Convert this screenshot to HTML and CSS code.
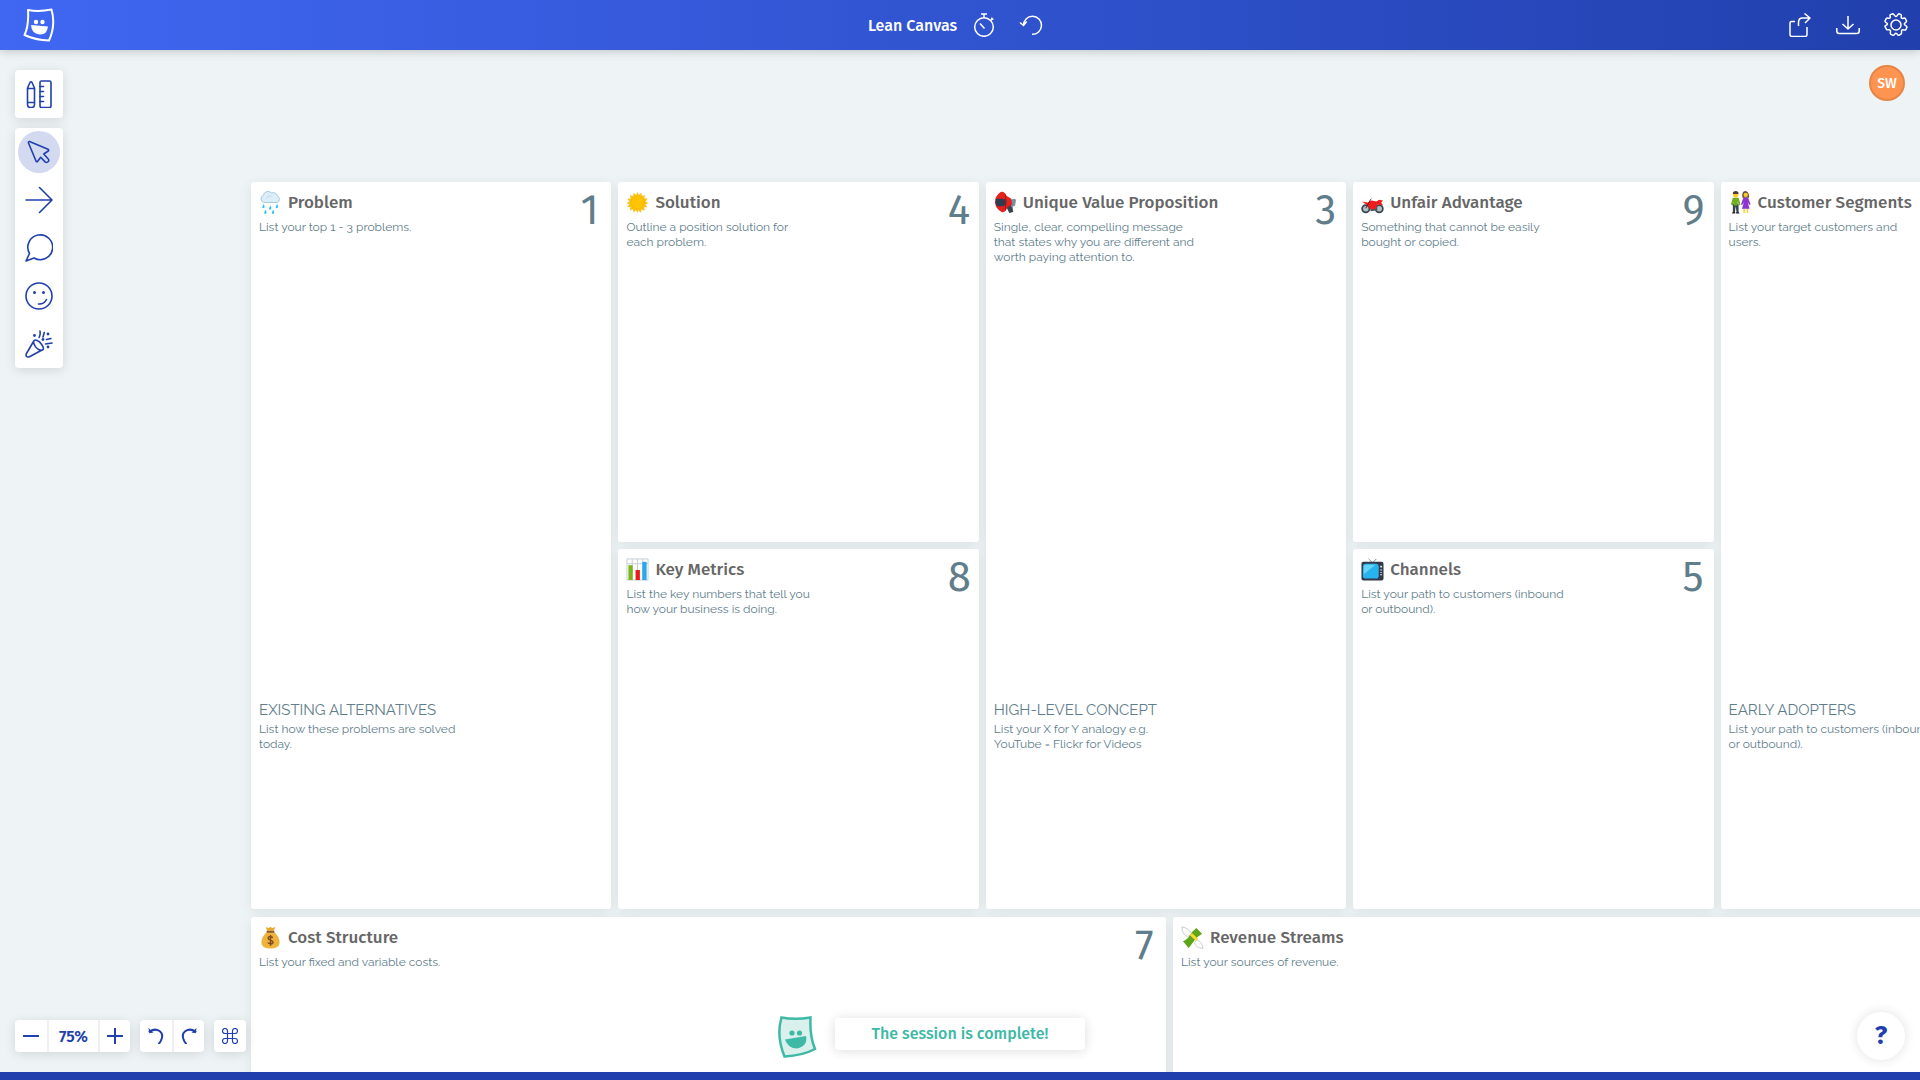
FILE: index.html
```
<!DOCTYPE html>
<html lang="en">
<head>
  <meta charset="UTF-8">
  <meta name="viewport" content="width=device-width, initial-scale=1.0">
  <link rel="stylesheet" href="styles.css">
  <title>Lean Canvas</title>
</head>
<body>

<header class="topbar">
  <div class="topbar-side">
    <a href="#" class="logo" aria-label="Home">
      <svg width="32" height="34" viewBox="0 0 32 34" fill="none" stroke="#fff" stroke-width="2" stroke-linejoin="round">
        <path d="M5 2 Q16 4 28.500 1.500 Q33 17 26 32.500 Q12 32 1.500 27 Q6 18 5 2z"/>
        <circle cx="13" cy="14" r="2.200" fill="#fff" stroke="none"/>
        <circle cx="19.500" cy="14" r="2.200" fill="#fff" stroke="none"/>
        <path d="M8 17 L25 18.500 Q24 27 16.500 26.500 Q8.500 25.500 8 17z" fill="#fff" stroke="none"/>
      </svg>
    </a>
  </div>

  <div class="topbar-center">
    <h1>Lean Canvas</h1>
    <button class="bar-btn" aria-label="Timer">
      <svg width="24" height="24" viewBox="0 0 24 24" fill="none" stroke="#fff" stroke-width="1.500">
        <circle cx="12" cy="14" r="9.300"/>
        <path d="M12 4.700V1M9 1h6M18.300 7.700l2-2M19.300 4.700l2 2M12.500 15.500L8 10.500"/>
      </svg>
    </button>
    <button class="bar-btn" aria-label="Reset">
      <svg width="24" height="24" viewBox="0 0 24 24" fill="none" stroke="#fff" stroke-width="1.500">
        <path d="M4.500 12.500a9 9 0 1 1 8.500 8.800M1 9.500l3.500 3 3.200-4"/>
      </svg>
    </button>
  </div>

  <div class="topbar-side topbar-right">
    <button class="bar-btn" aria-label="Share">
      <svg width="24" height="24" viewBox="0 0 24 24" fill="none" stroke="#fff" stroke-width="1.500" stroke-linejoin="round">
        <path d="M7 8.500H3.500A1.500 1.500 0 0 0 2 10v11.500a2 2 0 0 0 2 2h13a2 2 0 0 0 2-2V14M10.500 13V9.500q0-4.500 4-4.500h7.500M16.500.5L22 5l-5 5"/>
      </svg>
    </button>
    <button class="bar-btn" aria-label="Download">
      <svg width="24" height="24" viewBox="0 0 24 24" fill="none" stroke="#fff" stroke-width="1.500" stroke-linejoin="round">
        <path d="M.8 15v3a2.500 2.500 0 0 0 2.500 2.500h17.400a2.500 2.500 0 0 0 2.500-2.500v-3M12 3v13M6.500 11l5.500 5 5.500-5"/>
      </svg>
    </button>
    <button class="bar-btn" aria-label="Settings">
      <svg width="24" height="24" viewBox="0 0 24 24" fill="none" stroke="#fff" stroke-width="1.500" stroke-linejoin="round">
        <circle cx="12" cy="12" r="5"/>
        <path d="M12 3.500c1.500 0 1.500-2.700 3-2.700l2 .8c1.200.8-.6 2.700.6 3.600s2.800-1 3.700.3l1.200 2.500c.6 1.500-2.200 1.600-2.200 3s2.800 1.800 2.700 3.200l-1.200 2.500c-.8 1-2.900-.6-3.900.4s.4 2.900-.8 3.900l-2.300 1.300c-1.500.4-1.300-2.100-2.800-2.100s-1.500 2.500-3 2.100l-2.300-1.200c-1.200-1 .6-2.800-.5-3.900s-3 .4-3.700-.8L1 13.700c-.3-1.500 2.500-1.300 2.500-2.700S.7 9.400 1 8l1.200-2.400c.9-1.300 2.800.3 3.800-.6S5.200 2.300 6.400 1.600l2.300-.8c1.500 0 1.800 2.700 3.300 2.700z"/>
      </svg>
    </button>
  </div>
</header>

<main class="workspace">
  <div class="board">
    <div class="board-top">
      <section class="card tall">
        <div class="card-head">
          <svg class="emoji" viewBox="0 0 24 24">
            <path d="M5 12a4 4 0 0 1-.5-7.500A5 5 0 0 1 13 2a5 5 0 0 1 6.500 3.500 3.600 3.600 0 0 1-.5 6.500z" fill="#dceefa" stroke="#a3c4d9" stroke-width="1"/>
            <path d="M8 8a3 3 0 0 1 5-2" fill="none" stroke="#bdd6e6"/>
            <path d="M5 13.500q-3 4-.5 4.500 2.500-.5.500-4.500zM12 15q-3 4-.5 4.500 2.500-.5.500-4.500zM19 13.500q-3 4-.5 4.500 2.500-.5.500-4.500zM7 19.500q-3 4-.5 4.500 2.500-.5.500-4.500zM15 19.500q-3 4-.5 4.500 2.500-.5.500-4.500z" fill="#2cc3f5"/>
          </svg>
          <h2>Problem</h2>
          <span class="num">1</span>
        </div>
        <p>List your top 1 - 3 problems.</p>
        <div class="sub">
          <h3>EXISTING ALTERNATIVES</h3>
          <p>List how these problems are solved<br>today.</p>
        </div>
      </section>

      <section class="card">
        <div class="card-head">
          <svg class="emoji" viewBox="0 0 24 24">
            <path d="M12 1l1.500 3 2.700-2.200.4 3.500 3.300-1.100-.8 3.300 3.500.4L20.500 11l2.800 1.500-3 1.500 2 2.900-3.400.1.700 3.500-3.300-1.200-.9 3.400-2.500-2.400L12 23l-1.500-2.900L8 22.500l-.8-3.400-3.300 1.200.6-3.500-3.400-.2 2.100-2.700L.7 12.400 3.500 11 1.400 8l3.500-.3-.8-3.400 3.300 1.100L8 1.800l2.500 2.400z" fill="#fcc21b"/>
            <circle cx="12" cy="12" r="7" fill="#ffc400" stroke="#f4b000" stroke-width=".6"/>
          </svg>
          <h2>Solution</h2>
          <span class="num">4</span>
        </div>
        <p>Outline a position solution for<br>each problem.</p>
      </section>

      <section class="card tall">
        <div class="card-head">
          <svg class="emoji" viewBox="0 0 24 24">
            <path d="M14 13l5 1 1 8-4 1-3-6z" fill="#37474f"/>
            <path d="M17 9l4-1 2 1-1 6-4 2z" fill="#78909c"/>
            <path d="M7 1q4-1 6 4l5 3 1 6-5 3q-2 6-6 5Q2 19 1 12 1 5 7 1z" fill="#e5211d"/>
            <path d="M2 8h7l4 1v5l-4 2H3q-2-4-1-8z" fill="#2f3b50"/>
            <path d="M12 4v16" stroke="#a31515"/>
          </svg>
          <h2>Unique Value Proposition</h2>
          <span class="num">3</span>
        </div>
        <p>Single, clear, compelling message<br>that states why you are different and<br>worth paying attention to.</p>
        <div class="sub">
          <h3>HIGH-LEVEL CONCEPT</h3>
          <p>List your X for Y analogy e.g.<br>YouTube = Flickr for Videos</p>
        </div>
      </section>

      <section class="card">
        <div class="card-head">
          <svg class="emoji" viewBox="0 0 24 24">
            <circle cx="5" cy="18.500" r="3.800" fill="#b0bec5" stroke="#37474f" stroke-width="1.800"/>
            <circle cx="19" cy="18.500" r="3.800" fill="#b0bec5" stroke="#37474f" stroke-width="1.800"/>
            <path d="M9 14l8 0 0 6-7 1z" fill="#455a64"/>
            <path d="M1 11l6 1 4-2 5 1 3-2 4 1-2 2 2 3-6-1-2 5-5 0-3-4-3-2z" fill="#ee1c1c"/>
            <path d="M5 18l5-9 1-1" stroke="#7a1414" fill="none"/>
          </svg>
          <h2>Unfair Advantage</h2>
          <span class="num">9</span>
        </div>
        <p>Something that cannot be easily<br>bought or copied.</p>
      </section>

      <section class="card tall">
        <div class="card-head">
          <svg class="emoji" viewBox="0 0 24 24">
            <path d="M4 13h6v9H7.800l-.8-6-.8 6H4z" fill="#37474f"/>
            <path d="M4 7h6l2 7-1 1-2-4v4H5v-4l-1 4-2-1z" fill="#6fae1d"/>
            <circle cx="7" cy="4" r="2.800" fill="#ffca28"/>
            <path d="M4 3q0-3 3-3t3 3z" fill="#543930"/>
            <path d="M14 7q-1-7 3-7t4 7z" fill="#6d4c41"/>
            <path d="M15 18h1.500v5H15zM18.500 18H20v5h-1.500z" fill="#ffca28"/>
            <path d="M15 7h5l2.500 7-1.200.6L19.500 12l2 6.500h-8L15.500 12l-1.800 2.600-1.200-.6z" fill="#8e35d0"/>
            <circle cx="17.500" cy="4" r="2.300" fill="#ffca28"/>
            <path d="M4 22h2.500v1.500H3zM7.500 22H10l1 1.500H7.500z" fill="#222"/>
          </svg>
          <h2>Customer Segments</h2>
        </div>
        <p>List your target customers and<br>users.</p>
        <div class="sub">
          <h3>EARLY ADOPTERS</h3>
          <p>List your path to customers (inbound<br>or outbound).</p>
        </div>
      </section>

      <section class="card">
        <div class="card-head">
          <svg class="emoji" viewBox="0 0 24 24">
            <path d="M1 1h22v22H1zM1 6h22M6.500 1v22M12 1v22M17.500 1v22" fill="#fff" stroke="#c3ced6"/>
            <path d="M2.500 7.500H7V23H2.500z" fill="#7cb518"/>
            <path d="M10 12.500h4.500V23H10z" fill="#e91c1c"/>
            <path d="M17 4h4.500v19H17z" fill="#29a9ec"/>
          </svg>
          <h2>Key Metrics</h2>
          <span class="num">8</span>
        </div>
        <p>List the key numbers that tell you<br>how your business is doing.</p>
      </section>

      <section class="card">
        <div class="card-head">
          <svg class="emoji" viewBox="0 0 24 24">
            <path d="M8 1l4 4 4-4" fill="none" stroke="#78909c" stroke-width="1"/>
            <rect x="0.500" y="4" width="23" height="19.500" rx="2" fill="#33394a"/>
            <rect x="2" y="6" width="16.500" height="15.500" rx="3" fill="#27b3ee"/>
            <path d="M3 17V9q0-2 2-2h10z" fill="#67d2fb"/>
            <path d="M20 8h2v2h-2zM20 12h2v1h-2zM20 14.500h2v1h-2zM20 17h2v1h-2z" fill="#dfe5e8"/>
          </svg>
          <h2>Channels</h2>
          <span class="num">5</span>
        </div>
        <p>List your path to customers (inbound<br>or outbound).</p>
      </section>
    </div>

    <div class="board-bottom">
      <section class="card">
        <div class="card-head">
          <svg class="emoji" viewBox="0 0 24 24">
            <path d="M7 1l3 1 2-1 2 1 3-1-1.500 4h-7z" fill="#e8a92f"/>
            <path d="M8.500 6h7q6 5 6 11.500 0 6-9.500 6t-9.500-6Q2.500 11 8.500 6z" fill="#edb33c"/>
            <path d="M8 6h8" stroke="#8d5a2b" stroke-width="2"/>
            <path d="M14.500 12q-5-2-5 .8c0 2.500 5.200 1.300 5.200 4.200 0 2.500-5.200 1.300-5.200.3M12 9.500v11" fill="none" stroke="#7a4b22" stroke-width="1.500"/>
          </svg>
          <h2>Cost Structure</h2>
          <span class="num">7</span>
        </div>
        <p>List your fixed and variable costs.</p>
      </section>
      <section class="card">
        <div class="card-head">
          <svg class="emoji" viewBox="0 0 24 24">
            <path d="M1 1q7 1 10 7l-4 3Q1 9 1 1z" fill="#fff" stroke="#c5cdd2"/>
            <path d="M23 23.500q-8-1-9-6l3-3q5 2 6 9z" fill="#fff" stroke="#c5cdd2"/>
            <path d="M16 2l6 6Q17 11 14 15t-6 8l-6-7q5-2 7-6t7-8z" fill="#5fa51a"/>
            <path d="M9 9.500l6.500 6 2.300-2.200-6.500-6z" fill="#fdd835"/>
          </svg>
          <h2>Revenue Streams</h2>
        </div>
        <p>List your sources of revenue.</p>
      </section>
    </div>
  </div>

  <div class="tools">
    <div class="panel">
      <button class="tool" aria-label="Sticky tools">
        <svg width="28" height="28" viewBox="0 0 28 28">
          <path d="M2.500 8v16.500a3 3 0 0 0 3 3h1a3 3 0 0 0 3-3V8L7 2.500q-1-1.500-2 0zM2.500 8.500h7M2.500 22.500h7"/>
          <rect x="15" y="1" width="11" height="26.500" rx="1.500"/>
          <path d="M15 6.500h3.500M15 11.500h3.500M15 16.500h3.500M15 21.500h3.500"/>
        </svg>
      </button>
    </div>
    <div class="panel">
      <button class="tool active" aria-label="Select">
        <svg width="28" height="28" viewBox="0 0 28 28">
          <path d="M4.500 3.500q-1.500 0-1 1.500L11 23q.7 1.200 1.700.3l3-4 4.600 4.800q1.700 1 3.200-.8.800-1.300-.2-2.300L18.700 16l4.600-3q1-1-.3-1.800z"/>
        </svg>
      </button>
      <button class="tool" aria-label="Arrow">
        <svg width="28" height="28" viewBox="0 0 28 28">
          <path d="M1 14h26M14.500 1.500L27 14 14.500 26.500"/>
        </svg>
      </button>
      <button class="tool" aria-label="Comment">
        <svg width="28" height="28" viewBox="0 0 28 28">
          <path d="M1 27L4.500 19.500A12.400 12.400 0 1 1 9 24z"/>
        </svg>
      </button>
      <button class="tool" aria-label="Emoji">
        <svg width="28" height="28" viewBox="0 0 28 28">
          <circle cx="14" cy="14" r="13"/>
          <path d="M13.500 22q5.500.5 8-4.500"/>
          <circle cx="9.500" cy="10.500" r="1.500" class="dot"/>
          <circle cx="18.500" cy="10.500" r="1.500" class="dot"/>
        </svg>
      </button>
      <button class="tool" aria-label="Celebrate">
        <svg width="28" height="28" viewBox="0 0 28 28">
          <path d="M8.800 11L1.200 24q-.8 3.500 2.800 3L17.500 19.800M8.800 11c1-2.500 5.500 0 7.500 3s3 5 1.200 6-6-1-7.500-4-2-3.500-1.200-5z"/>
          <path d="M15 1q.8 3-.8 6.500M19.300 2.500L18 7M21.500 9.500l4.500-1M20.500 14l6.500-1"/>
          <circle cx="9.500" cy="5.500" r="1.400" class="dot"/>
          <circle cx="23" cy="4" r="1.400" class="dot"/>
          <circle cx="18" cy="9.500" r="1.400" class="dot"/>
          <circle cx="23" cy="17" r="1.400" class="dot"/>
        </svg>
      </button>
    </div>
  </div>

  <div class="avatar">SW</div>

  <div class="controls">
    <div class="group">
      <button class="ctl" aria-label="Zoom out">
        <svg width="16" height="16" viewBox="0 0 16 16"><path d="M0 8h16"/></svg>
      </button>
      <button class="ctl zoom">75%</button>
      <button class="ctl" aria-label="Zoom in">
        <svg width="16" height="16" viewBox="0 0 16 16"><path d="M0 8h16M8 0v16"/></svg>
      </button>
    </div>
    <div class="group">
      <button class="ctl" aria-label="Undo">
        <svg width="16" height="16" viewBox="0 0 16 16"><path d="M1.500 3.500Q7 0 11.500 3T13 12.500q-.8 2-2 3"/><path class="dot" d="M.5 0l.8 5.200 4.200-.6z"/></svg>
      </button>
      <button class="ctl" aria-label="Redo">
        <svg width="16" height="16" viewBox="0 0 16 16"><path d="M14.500 3.500Q9 0 4.500 3T3 12.500q.8 2 2 3"/><path class="dot" d="M15.500 0l-.8 5.200-4.200-.6z"/></svg>
      </button>
    </div>
    <div class="group">
      <button class="ctl cmd" aria-label="Shortcuts">
        <svg width="16" height="16" viewBox="0 0 16 16">
          <path d="M5.500 5.500h5v5h-5zM5.500 5.500H3A2.500 2.500 0 1 1 5.500 3zM10.500 5.500V3A2.500 2.500 0 1 1 13 5.500zM10.500 10.500H13a2.500 2.500 0 1 1-2.500 2.500zM5.500 10.500V13A2.500 2.500 0 1 1 3 10.500z"/>
        </svg>
      </button>
    </div>
  </div>

  <div class="notice">
    <svg width="40" height="42" viewBox="0 0 40 42">
      <path d="M4.500 1.500Q18 4 33.500 1.500 32.500 20 38 33 26 39.500 7.500 40.500-1 20 4.500 1.500z" fill="#d9f0ec" stroke="#3db9a6" stroke-width="2.500"/>
      <circle cx="15" cy="17" r="2.600" fill="#3db9a6"/>
      <circle cx="22.500" cy="17" r="2.600" fill="#3db9a6"/>
      <path d="M8 23.500L29 20q2 10-9 12.500-9 0-12-9z" fill="#3db9a6"/>
    </svg>
    <div class="toast">The session is complete!</div>
  </div>

  <button class="help" aria-label="Help">?</button>
</main>

<footer class="progress"></footer>

</body>
</html>
```
FILE: styles.css
```
* {
  box-sizing: border-box;
}

body {
  display: flex;
  flex-direction: column;
  height: 100vh;
  margin: 0;
  overflow: hidden;
  font-family: "Fira Sans", "Noto Sans", sans-serif;
  background: #eef3f6;
}

h1, h2, h3, p {
  margin: 0;
}

button {
  display: flex;
  justify-content: center;
  align-items: center;
  padding: 0;
  border: 0;
  background: none;
  color: #2140ad;
  font-family: inherit;
  cursor: pointer;
}

/* top bar */

.topbar {
  position: relative;
  z-index: 1;
  display: flex;
  flex: none;
  align-items: center;
  height: 50px;
  padding: 0 12px 0 23px;
  background: linear-gradient(90deg, #4067f2, #2140ad);
  box-shadow: 0 0 10px rgba(0, 0, 0, 0.25);
}

.topbar-side {
  display: flex;
  flex: 1;
}

.topbar-right {
  justify-content: flex-end;
  gap: 24px;
}

.topbar-center {
  display: flex;
  align-items: center;
  gap: 23px;
  margin-right: 20px;
}

.topbar-center h1 {
  margin-right: -8px;
  color: #fff;
  font-size: 16px;
  font-weight: 500;
}

.logo {
  display: flex;
}

/* canvas */

.workspace {
  position: relative;
  flex: 1;
  min-height: 0;
  overflow: hidden;
}

.board {
  width: 1837px;
  margin: 132px 0 0 251px;
}

.board-top {
  display: grid;
  grid-template-columns: repeat(5, 1fr);
  grid-template-rows: 360px 360px;
  gap: 7px;
  width: 1830px;
}

.board-bottom {
  display: grid;
  grid-template-columns: 1fr 1fr;
  gap: 7px;
  height: 360px;
  margin-top: 8px;
}

.card {
  display: flex;
  flex-direction: column;
  padding: 8px;
  border-radius: 3px;
  background: #fff;
  color: #607d8b;
  box-shadow: 0 2px 12px rgba(0, 0, 0, 0.08);
}

.card.tall {
  grid-row: span 2;
}

.card-head {
  display: flex;
  align-items: center;
  height: 24px;
  margin-bottom: 6px;
}

.emoji {
  flex: none;
  width: 23px;
  height: 23px;
  margin-right: 6px;
}

.card h2 {
  padding-top: 2px;
  color: #666;
  font-size: 17px;
  font-weight: 500;
  line-height: 24px;
}

.num {
  align-self: flex-start;
  min-width: 23px;
  margin-left: auto;
  font-size: 42px;
  line-height: 40px;
}

.card p,
.card h3 {
  font-family: Raleway, Lato, sans-serif;
}

.card p {
  font-size: 12px;
  line-height: 15px;
}

.card h3 {
  margin-bottom: 2px;
  font-size: 15px;
  font-weight: 400;
  line-height: 20px;
}

.sub {
  margin-top: auto;
  margin-bottom: 149px;
}

/* left tools */

.tools {
  position: absolute;
  top: 20px;
  left: 15px;
  display: flex;
  flex-direction: column;
  gap: 10px;
}

.panel,
.group {
  border-radius: 4px;
  background: #fff;
  box-shadow: 0 2px 12px rgba(0, 0, 0, 0.12);
}

.panel {
  padding: 3px;
}

.tool {
  width: 42px;
  height: 42px;
  border-radius: 50%;
}

.tool + .tool {
  margin-top: 6px;
}

.tool.active {
  background: #d3d9ef;
}

.tool svg,
.ctl svg {
  fill: none;
  stroke: #2140ad;
  stroke-width: 1.6;
  stroke-linecap: round;
  stroke-linejoin: round;
}

.tool .dot,
.ctl .dot {
  fill: #2140ad;
  stroke: none;
}

.avatar {
  position: absolute;
  top: 15px;
  right: 15px;
  width: 36px;
  height: 36px;
  border: 2px solid #e58546;
  border-radius: 50%;
  background: #ff9350;
  color: #fff;
  font-size: 14px;
  font-weight: 500;
  line-height: 33px;
  text-align: center;
}

/* bottom controls */

.controls {
  position: absolute;
  bottom: 20px;
  left: 15px;
  display: flex;
  gap: 10px;
}

.group {
  display: flex;
}

.ctl {
  width: 32px;
  height: 32px;
}

.ctl + .ctl {
  border-left: 2px solid #f0f0f0;
}

.ctl svg {
  stroke-width: 2;
}

.ctl.zoom {
  width: 51px;
  font-size: 16px;
  font-weight: 600;
}

.ctl.cmd svg {
  stroke-width: 1.2;
}

.notice {
  position: absolute;
  right: 0;
  bottom: 14px;
  left: 0;
  display: flex;
  justify-content: center;
  gap: 18px;
  padding-right: 58px;
}

.toast {
  width: 250px;
  height: 32px;
  margin-top: 2px;
  border-radius: 4px;
  background: #fff;
  box-shadow: 0 1px 12px rgba(0, 0, 0, 0.14);
  color: #3db9a6;
  font-size: 16px;
  font-weight: 500;
  line-height: 32px;
  text-align: center;
}

.help {
  position: absolute;
  right: 15px;
  bottom: 12px;
  width: 48px;
  height: 48px;
  padding-bottom: 2px;
  border-radius: 50%;
  background: #fff;
  box-shadow: 0 0 12px rgba(0, 0, 0, 0.12);
  font-size: 26px;
  font-weight: 700;
}

.progress {
  flex: none;
  height: 8px;
  background: #2140ad;
}
```
